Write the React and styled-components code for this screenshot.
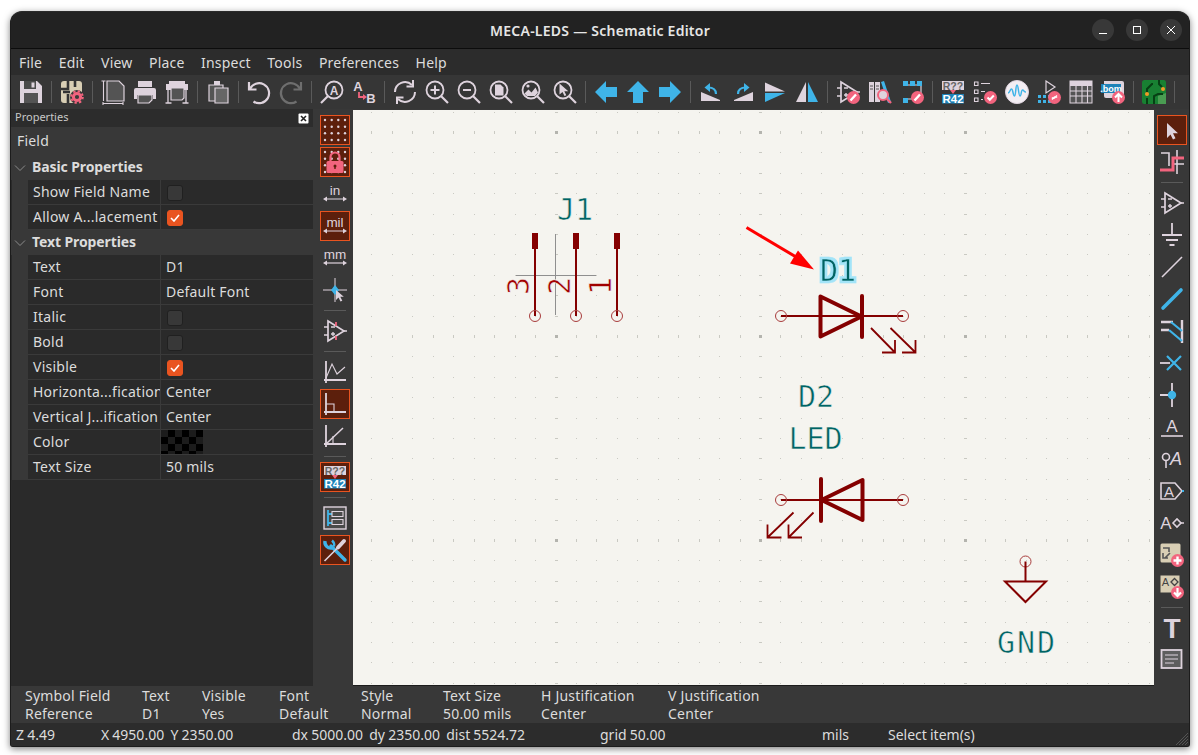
import styled, { createGlobalStyle } from "styled-components";

const P = "#ded3dd";
const B = "#3fb4e8";
const R = "#f2647e";
const D = "#545454";
const ORANGE = "#e95420";
const WIRE = "#840000";
const TEAL = "#006464";
const PAPER = "#f5f4ef";

const GlobalStyle = createGlobalStyle`
    html, body {
        margin: 0;
        background: #ffffff;
    }
    body {
        font-family: "Noto Sans", "Open Sans", sans-serif;
        font-size: 14px;
        color: #dcdcdc;
    }
`;

const Page = styled.div`
    padding: 11px 8px 8px 10px;
`;

const Window = styled.div`
    width: 1180px;
    height: 736px;
    box-sizing: border-box;
    display: flex;
    flex-direction: column;
    border: 1px solid #1c1c1c;
    border-top-color: #2a2a2a;
    border-radius: 12px 12px 3px 3px;
    overflow: hidden;
    background: #383838;
    box-shadow: 0 2px 7px rgba(0, 0, 0, 0.5);
`;

const TitleBar = styled.div`
    height: 36px;
    flex: none;
    display: flex;
    align-items: center;
    justify-content: center;
    position: relative;
    background: #222222;
    border-bottom: 1px solid #0c0c0c;
`;

const Title = styled.div`
    font-size: 14px;
    font-weight: 600;
    letter-spacing: 0.25px;
    color: #e6e6e6;
`;

const WindowButtons = styled.div`
    position: absolute;
    right: 7px;
    top: 7px;
    display: flex;
    gap: 12px;
`;

const WindowButton = styled.div`
    width: 22px;
    height: 22px;
    border-radius: 50%;
    background: #383838;
    display: flex;
    align-items: center;
    justify-content: center;
`;

const MenuBar = styled.div`
    height: 26px;
    flex: none;
    display: flex;
    align-items: center;
    padding-left: 8px;
    gap: 16.5px;
    background: #2c2c2c;
    font-size: 14px;
    letter-spacing: 0.2px;
`;

const TopBar = styled.div`
    height: 34px;
    flex: none;
    display: flex;
    align-items: center;
    padding-left: 4px;
    background: #363636;
`;

const Button = styled.div`
    width: 32px;
    height: 32px;
    flex: none;
    display: flex;
    align-items: center;
    justify-content: center;
`;

const ButtonFace = styled.div`
    width: 30px;
    height: 30px;
    box-sizing: border-box;
    display: flex;
    align-items: center;
    justify-content: center;
    border: ${({ $active }) => ($active ? `1px solid ${ORANGE}` : "none")};
    background: ${({ $active }) => ($active ? "#5c1f0c" : "transparent")};
`;

const Glyph = styled.svg`
    width: 24px;
    height: 24px;
    display: block;
    flex: none;
    overflow: visible;
`;

const VSep = styled.div`
    width: 1px;
    height: 22px;
    margin: 0 4px;
    flex: none;
    background: #5a5a5a;
`;

const HSep = styled.div`
    width: 22px;
    height: 1px;
    margin: 4px 5px;
    flex: none;
    background: #5a5a5a;
`;

const Main = styled.div`
    height: 577px;
    flex: none;
    display: flex;
`;

const Panel = styled.div`
    width: 302px;
    flex: none;
    display: flex;
    flex-direction: column;
    background: #2a2a2a;
`;

const PanelCaption = styled.div`
    height: 18px;
    box-sizing: border-box;
    flex: none;
    display: flex;
    align-items: center;
    justify-content: space-between;
    padding: 0 4px 3px;
    background: #2c2c2c;
    font-size: 11px;
    color: #c8c8c8;
`;

const CloseBox = styled.svg`
    width: 11px;
    height: 11px;
    margin-top: 3px;
`;

const PanelTitle = styled.div`
    height: 28px;
    box-sizing: border-box;
    flex: none;
    display: flex;
    align-items: center;
    padding: 0 0 2px 6px;
    background: #383838;
    letter-spacing: 0.2px;
`;

const Section = styled.div`
    height: 25px;
    box-sizing: border-box;
    flex: none;
    display: flex;
    align-items: center;
    padding-bottom: 2px;
    background: #383838;
    font-weight: 700;
    letter-spacing: -0.1px;
`;

const Chevron = styled.svg`
    width: 12px;
    height: 8px;
    margin: 2px 6px 0 3px;
`;

const Rows = styled.div`
    flex: none;
    border-left: 16px solid #383838;
    margin-left: 1px;
`;

const Row = styled.div`
    height: 25px;
    box-sizing: border-box;
    display: grid;
    grid-template-columns: 133px 1fr;
    align-items: center;
    border-bottom: 1px solid #3a3a3a;
    background: #2a2a2a;
`;

const Label = styled.div`
    box-sizing: border-box;
    padding: 0 0 2px 5px;
    height: 100%;
    display: flex;
    align-items: center;
    white-space: nowrap;
    overflow: hidden;
    letter-spacing: 0.25px;
    border-right: 1px solid #3a3a3a;
`;

const Value = styled.div`
    padding: 0 0 ${({ $text }) => ($text ? 2 : 0)}px 5px;
    white-space: nowrap;
    letter-spacing: 0.2px;
`;

const Check = styled.div`
    width: 16px;
    height: 16px;
    box-sizing: border-box;
    margin: 2px 0 0 1px;
    border-radius: 3px;
    display: flex;
    align-items: center;
    justify-content: center;
    background: ${({ $on }) => ($on ? ORANGE : "#383838")};
    border: 1px solid ${({ $on }) => ($on ? ORANGE : "#202020")};
`;

const Swatch = styled.div`
    width: 42px;
    height: 24px;
    margin-left: -5px;
    background: repeating-conic-gradient(#000000 0 25%, #1c1c1c 0 50%) 0 0 / 14px 14px;
`;

const SideBar = styled.div`
    flex: none;
    display: flex;
    flex-direction: column;
    padding: 5px 0 0 ${({ $left }) => $left}px;
    width: ${({ $width }) => $width}px;
    box-sizing: border-box;
    background: #383838;
`;

const Canvas = styled.div`
    flex: 1;
    min-width: 0;
    margin-top: 1px;
    background: ${PAPER};
    border-bottom: 1px solid #1c1c1c;
`;

const Sheet = styled.svg`
    display: block;
    width: 801px;
    height: 575px;
`;

const FieldText = styled.text`
    font-family: "DejaVu Sans Mono", monospace;
    font-size: 30px;
    fill: ${({ $color }) => $color || TEAL};
    stroke: ${({ $edge }) => $edge || PAPER};
    stroke-width: 0.6px;
`;

const MessagePanel = styled.div`
    height: 37px;
    flex: none;
    display: grid;
    grid-template-columns: 117px 60px 77px 82px 82px 98px 127px 1fr;
    align-content: center;
    padding-left: 14px;
    background: #383838;
    line-height: 18px;
    letter-spacing: 0.2px;
`;

const Cell = styled.div`
    white-space: nowrap;
`;

const StatusBar = styled.div`
    height: 23px;
    flex: none;
    display: flex;
    align-items: center;
    padding-left: 5px;
    background: #2c2c2c;
`;

const StatusItem = styled.div`
    width: ${({ $width }) => $width}px;
    flex: none;
    white-space: pre;
    word-spacing: -0.5px;
`;

const Grip = styled.svg`
    width: 14px;
    height: 18px;
    margin-left: auto;
    margin-top: 4px;
`;

const Stroke = ({ d, c = P, w = 1.8, ...rest }) => (
    <path d={d} fill="none" stroke={c} strokeWidth={w} {...rest} />
);

const Lens = ({ children }) => (
    <>
        <circle cx="10" cy="10" r="8.5" fill="none" stroke={P} strokeWidth="1.8" />
        <Stroke d="M16 16l7 7" w="2.2" />
        {children}
    </>
);

const Amp = ({ pins }) => (
    <>
        <path d="M5 2 21 12 5 22Z" fill="none" stroke={P} strokeWidth="1.7" />
        <Stroke d="M1 8h4M1 16h4M21 12h3M8 8h4M8 15h4M10 13v4" w="1.4" />
        {pins && <Stroke d="M13 3v4M13 17v4" c={R} w="1.8" />}
    </>
);

const Badge = ({ children }) => (
    <>
        <circle cx="17.5" cy="17.5" r="6.5" fill={R} />
        {children}
    </>
);

const Pencil = () => <Stroke d="M14.5 20.5l5.5-6" c="#ffffff" w="2.4" />;

const Tiny = ({ x, y, size = 10, fill = P, bold, italic, children }) => (
    <text
        x={x}
        y={y}
        textAnchor="middle"
        fontFamily="'Liberation Sans', sans-serif"
        fontSize={size}
        fontWeight={bold ? 700 : 400}
        fontStyle={italic ? "italic" : "normal"}
        fill={fill}
    >
        {children}
    </text>
);

const Unit = ({ label, y = 17 }) => (
    <>
        <Tiny x="12" y={y - 4} size="13.5">
            {label}
        </Tiny>
        <Stroke d={`M2 ${y}h20`} w="1.2" />
        <path d={`M0 ${y}l4-2.5v5zM24 ${y}l-4-2.5v5z`} fill={P} />
    </>
);

const Annotate = () => (
    <>
        <rect x="1" y="1" width="22" height="9" fill={P} />
        <Tiny x="12" y="9.5" size="10.5" fill="#666666" bold>
            R??
        </Tiny>
        <path d="M9 10h6l-3 4z" fill={R} />
        <rect x="1" y="14" width="22" height="9.5" fill="#1d82b8" />
        <Tiny x="12" y="23" size="11.5" fill="#ffffff" bold>
            R42
        </Tiny>
    </>
);

const DOT_STEPS = [2, 8.7, 15.3, 22];

const GridDots = () => (
    <>
        {DOT_STEPS.flatMap((y) =>
            DOT_STEPS.map((x) => (
                <circle key={`${x}-${y}`} cx={x} cy={y} r="1.2" fill={P} />
            ))
        )}
    </>
);

const ICONS = {
    save: (
        <>
            <path d="M1 1h17l5 5v17H1z" fill={P} />
            <path d="M5 1h12v8H5z" fill="#4a4a4a" />
            <path d="M12.5 2.5h3v5h-3z" fill={P} />
            <path d="M5 13h14v10H5z" fill={D} />
        </>
    ),
    symbolLib: (
        <>
            <rect x="1" y="1" width="21" height="22" rx="3" fill="#d8ceb4" />
            <Stroke d="M8 1v8H1M8 14v9M15 1v6M3 12h7" c="#333333" w="2.6" />
            <circle cx="17" cy="17" r="7" fill="#3a3a3a" />
            <circle cx="17" cy="17" r="3.6" fill="none" stroke={R} strokeWidth="3" />
            <circle cx="17" cy="17" r="5.8" fill="none" stroke={R} strokeWidth="2" strokeDasharray="2.3 2.25" />
        </>
    ),
    page: (
        <>
            <path d="M6 1h12l5 5v15H6z" fill={D} stroke={P} strokeWidth="1.2" />
            <Stroke d="M2.5 1v20M0.5 1h4M2 23.5h20M2 22v3M22 22v3" w="1.1" />
        </>
    ),
    print: (
        <>
            <path d="M5 1h14v6H5z" fill={P} />
            <path d="M3 8h18a2 2 0 0 1 2 2v9h-3v-4H4v4H1v-9a2 2 0 0 1 2-2z" fill={P} />
            <path d="M5 15h14v5l-3 3H5z" fill={D} stroke={P} strokeWidth="1.2" />
        </>
    ),
    plot: (
        <>
            <path d="M4 1h16v3H4zM1 4h22v6H1z" fill={P} />
            <path d="M6 8h13v10l-2 2H6z" fill={D} stroke={P} strokeWidth="1.2" />
            <Stroke d="M3 10v13M21 10v13M0.5 23h6M17.5 23h6" w="1.3" />
        </>
    ),
    paste: (
        <>
            <path d="M8 1h6v4H8z" fill={P} />
            <path d="M3 5h14v16H3z" fill={D} stroke={P} strokeWidth="1.2" />
            <path d="M9 8h13v15H9z" fill="#666666" stroke={P} strokeWidth="1.2" />
        </>
    ),
    undo: (
        <g transform="translate(-1.5 0)">
            <Stroke d="M4.5 9A10 10 0 1 1 8 21.5" w="2.2" />
            <Stroke d="M3.5 2v7.5H11" w="2.2" />
        </g>
    ),
    redo: (
        <g transform="translate(1.5 0)">
            <Stroke d="M19.5 9A10 10 0 1 0 16 21.5" c="#6e6e6e" w="2.2" />
            <Stroke d="M20.5 2v7.5H13" c="#6e6e6e" w="2.2" />
        </g>
    ),
    find: (
        <>
            <circle cx="14" cy="10" r="8.5" fill="none" stroke={P} strokeWidth="1.8" />
            <Stroke d="M8 16l-7 7" w="2.2" />
            <Tiny x="14" y="14.5" size="12" bold>
                A
            </Tiny>
        </>
    ),
    replace: (
        <>
            <Tiny x="6" y="11" size="13" bold>
                A
            </Tiny>
            <Stroke d="M7 12v5h5" c={R} w="1.8" />
            <path d="M11 14l4 3-4 3z" fill={R} />
            <Tiny x="19" y="23" size="13" bold>
                B
            </Tiny>
        </>
    ),
    refresh: (
        <>
            <Stroke d="M2 12A10 10 0 0 1 19 5" w="2" />
            <Stroke d="M22 12A10 10 0 0 1 5 19" w="2" />
            <Stroke d="M20 0v6.5h-6.5M4 24v-6.5h6.5" w="2" />
        </>
    ),
    zoomIn: (
        <Lens>
            <Stroke d="M5.5 10h9M10 5.5v9" w="2" />
        </Lens>
    ),
    zoomOut: (
        <Lens>
            <Stroke d="M6 10h8" w="2.2" />
        </Lens>
    ),
    zoomFit: (
        <Lens>
            <path d="M6 4.5h5.5l3 3V15.5H6z" fill={P} />
        </Lens>
    ),
    zoomObject: (
        <Lens>
            <path d="M3.5 13.5l4-4 3 3 4-5 2.5 5-3 3.5H6z" fill={P} />
            <circle cx="7" cy="6" r="1.6" fill={P} />
        </Lens>
    ),
    zoomSelect: (
        <Lens>
            <path d="M6.5 3.5v11l3-2.5 2 4 1.8-.8-2-4h4z" fill={P} />
        </Lens>
    ),
    left: <path d="M1 12 12 1v6h11v10H12v6z" fill={B} />,
    up: <path d="M12 1l11 11h-6v11H7V12H1z" fill={B} />,
    right: <path d="M23 12 12 1v6H1v10h11v6z" fill={B} />,
    rotateCcw: (
        <>
            <path d="M2 21h19v-1L2 12z" fill={P} />
            <Stroke d="M17 14C17 9.5 14.5 7.5 9 7.5" c={B} w="2.2" />
            <path d="M5.5 7.5 11 3v9z" fill={B} />
        </>
    ),
    rotateCw: (
        <>
            <path d="M22 21H3v-1l19-8z" fill={P} />
            <Stroke d="M7 14C7 9.5 9.5 7.5 15 7.5" c={B} w="2.2" />
            <path d="M18.5 7.5 13 3v9z" fill={B} />
        </>
    ),
    mirrorV: (
        <>
            <path d="M2 2.5 22 11.5H2z" fill={P} />
            <path d="M2 13h20L2 22z" fill={B} />
        </>
    ),
    mirrorH: (
        <>
            <path d="M11 2v20H1z" fill={P} />
            <path d="M13 2v20h10z" fill={B} />
        </>
    ),
    symbolEdit: (
        <>
            <Amp />
            <Badge>
                <Pencil />
            </Badge>
        </>
    ),
    libBrowser: (
        <>
            <path d="M1 2h5v20H1zM7 2h5v20H7z" fill={P} />
            <path d="M13 2l3-1 7 21-3 1z" fill={B} />
            <Stroke d="M2 6h3M8 6h3M2 9h3M8 9h3" c="#555555" w="1.2" />
            <circle cx="15" cy="15" r="5" fill={P} stroke={R} strokeWidth="2" />
            <Stroke d="M19 19l4 4" c={R} w="2.4" />
        </>
    ),
    footprintEdit: (
        <>
            <path d="M3 5h18v14H3" fill="none" stroke={P} strokeWidth="1.2" />
            <path d="M3 1h5v5H3zM10 1h5v5h-5zM17 1h5v5h-5zM3 18h5v5H3z" fill={B} />
            <Badge>
                <Pencil />
            </Badge>
        </>
    ),
    annotate: <Annotate />,
    erc: (
        <>
            <Stroke d="M1.5 2H5v3.5H1.5zM1.5 10H5v3.5H1.5zM1.5 18H5v3.5H1.5z" w="1.1" />
            <Stroke d="M8 3.5h9M8 11.5h4M8 19.5h2" w="1.2" />
            <Badge>
                <Stroke d="M14.5 17.5l2.3 2.3 4-4.3" c="#ffffff" w="2" />
            </Badge>
        </>
    ),
    simulator: (
        <>
            <circle cx="12" cy="12" r="11.5" fill="#f3eef3" stroke={P} />
            <Stroke d="M3 13c2 0 2-4 3.5-4s1.5 7 3 7 1-11 2.5-11 1.5 11 3 11 1-6 2.5-6 1.5 2 3.5 2" c={B} w="1.5" />
        </>
    ),
    pcbSync: (
        <>
            <path d="M9 1l9 6-9 6z" fill="none" stroke={P} strokeWidth="1.2" />
            <path d="M1 15h3v3H1zM1 20h3v3H1zM6 15h3v3H6zM6 20h3v3H6zM11 15h3v3h-3zM11 20h3v3h-3z" fill={B} />
            <Badge>
                <Stroke d="M15 19.5l2-2a2 2 0 0 1 3 0M20 15.5l-2 2a2 2 0 0 1-3 0" c="#ffffff" w="1.5" />
            </Badge>
        </>
    ),
    table: (
        <>
            <rect x="1" y="1" width="22" height="22" fill={D} stroke={P} strokeWidth="1" />
            <path d="M1 1h22v5H1z" fill={P} />
            <Stroke d="M1 11h22M1 16h22M7 1v22M13 1v22M18.5 1v22" w="1.1" />
        </>
    ),
    bom: (
        <>
            <path d="M3 1h18a2 2 0 0 1 2 2v15H5a2 2 0 0 1-2-2z" fill={P} />
            <rect x="0" y="4" width="20" height="9" fill="#1d82b8" />
            <Tiny x="10" y="11.5" size="9" fill="#ffffff" bold>
                .bom
            </Tiny>
            <Badge>
                <Stroke d="M17.5 22v-8M14 17.5l3.5-3.5 3.5 3.5" c="#ffffff" w="2" />
            </Badge>
        </>
    ),
    pcb: (
        <>
            <rect x="0" y="0" width="24" height="24" rx="2.5" fill="#188032" />
            <path d="M16 24V16l8-3v11z" fill="#4a9c52" />
            <Stroke d="M5 14V9l5-5h1M5 24v-6M12 24v-8l4-2h5M17 0v4l3 3" c="#073f14" w="2" />
            <circle cx="5" cy="14" r="2" fill="#f09a28" />
            <circle cx="21" cy="9" r="2" fill="#f09a28" />
        </>
    ),
    gridDots: <GridDots />,
    gridLock: (
        <>
            <GridDots />
            <path d="M7.5 11V7a4.5 4.5 0 0 1 9 0v4" fill="none" stroke={R} strokeWidth="2.2" />
            <rect x="3.5" y="11" width="17" height="12" rx="1.5" fill={R} />
            <circle cx="12" cy="16" r="1.5" fill="#5c1f0c" />
            <path d="M11.3 16h1.4v3h-1.4z" fill="#5c1f0c" />
        </>
    ),
    inch: <Unit label="in" />,
    mil: <Unit label="mil" />,
    mm: <Unit label="mm" />,
    cursor: (
        <>
            <Stroke d="M12 0v24M0 12h24" w="1" />
            <path d="M12 7l4 5-4 5-4-5z" fill={B} />
            <path d="M13 12v10l2.5-2.5 2 4 1.8-.8-2-4h3.5z" fill={P} />
        </>
    ),
    ampPins: <Amp pins />,
    lineFree: (
        <>
            <Stroke d="M3 1v22M1 20h22" w="1.8" />
            <Stroke d="M3 18 9 4l5 10 8-7" w="1.1" />
        </>
    ),
    lineNinety: (
        <>
            <Stroke d="M3 1v22M1 20h22" w="1.8" />
            <Stroke d="M3 12h8v8" w="1.1" />
        </>
    ),
    lineAny: (
        <>
            <Stroke d="M3 1v22M1 20h22" w="1.8" />
            <Stroke d="M3 20 20 4" w="1.5" />
            <Stroke d="M10 12v8" w="1.1" />
        </>
    ),
    tree: (
        <>
            <rect x="1" y="1" width="22" height="22" fill="#4a4a4a" stroke={P} strokeWidth="1.4" />
            <Stroke d="M5 4v16M5 8h4M5 17h4" c={B} w="1.8" />
            <Stroke d="M9 5.5h11v5H9zM9 13.5h11v5H9z" w="1.1" />
        </>
    ),
    tools: (
        <>
            <Stroke d="M22 22 8 8" c={B} w="3.4" strokeLinecap="round" />
            <Stroke d="M2 3a6 6 0 0 0 7 7" c={B} w="3.4" />
            <Stroke d="M9 2.5a6 6 0 0 1 2 6" c={B} w="2.4" />
            <Stroke d="M1.5 23 14 10.5" w="1.6" />
            <Stroke d="M15 9.5 21 3" w="4" strokeLinecap="round" />
        </>
    ),
    select: <path d="M7 5v15l3.5-3.5 2.5 5 2.5-1.2-2.5-5h5z" fill={P} />,
    netHighlight: (
        <>
            <Stroke d="M1 3h8v13M17 0v24M13 14h11" w="1.6" />
            <Stroke d="M0 20h13V8h11" c={R} w="3" />
        </>
    ),
    amp: <Amp />,
    ground: <Stroke d="M12 0v12M2 12h20M6 17h12M9.5 22h5" w="1.8" />,
    line: <Stroke d="M2 22 22 2" w="1.6" />,
    wire: <Stroke d="M3 21 21 3" c={B} w="3.6" strokeLinecap="round" />,
    busEntry: (
        <>
            <Stroke d="M1 3h12M1 11h8M22 1v23" w="2.4" />
            <Stroke d="M11 3l11 9M9 11l13 11" c={B} w="2.2" />
        </>
    ),
    noConnect: (
        <>
            <Stroke d="M0 12h10" w="1.8" />
            <Stroke d="M7 5l14 14M21 5 7 19" c={B} w="2.2" />
        </>
    ),
    junction: (
        <>
            <Stroke d="M12 0v24M0 12h12" w="1.8" />
            <circle cx="12" cy="12" r="4.2" fill={B} />
        </>
    ),
    textLabel: (
        <>
            <Tiny x="12" y="17" size="17">
                A
            </Tiny>
            <Stroke d="M1 21h22" w="1.6" />
        </>
    ),
    netLabel: (
        <>
            <circle cx="6" cy="10" r="3.5" fill="none" stroke={P} strokeWidth="1.6" />
            <Stroke d="M6 14v7" w="1.6" />
            <Tiny x="16" y="18" size="18" italic>
                A
            </Tiny>
        </>
    ),
    globalLabel: (
        <>
            <path d="M1 4h14l7 8-7 8H1z" fill="none" stroke={P} strokeWidth="1.6" />
            <Tiny x="9" y="17.5" size="15">
                A
            </Tiny>
            <Stroke d="M22 12h2" c={B} w="1.8" />
        </>
    ),
    hierLabel: (
        <>
            <Tiny x="6" y="18" size="17">
                A
            </Tiny>
            <path d="M13 12l4-4 4 4-4 4z" fill="none" stroke={P} strokeWidth="1.6" />
            <Stroke d="M21 12h3" w="1.6" />
        </>
    ),
    sheetPin: (
        <>
            <rect x="0.5" y="0.5" width="20" height="19" rx="1.5" fill="#d8ceb4" />
            <Stroke d="M3 5h6v4M5 15l5-5M3 10v5h5" c="#555555" w="1.6" />
            <Badge>
                <Stroke d="M17.5 13.5v8M13.5 17.5h8" c="#ffffff" w="2.4" />
            </Badge>
        </>
    ),
    sheetImport: (
        <>
            <rect x="0.5" y="0.5" width="19" height="17" fill="#d8ceb4" />
            <Tiny x="5.5" y="11" size="11" fill="#444444">
                A
            </Tiny>
            <path d="M11 7l3.5-3.5L18 7l-3.5 3.5z" fill="none" stroke="#444444" strokeWidth="1.3" />
            <Badge>
                <Stroke d="M17.5 13v8M14 17.5l3.5 3.5 3.5-3.5" c="#ffffff" w="2.2" />
            </Badge>
        </>
    ),
    bigText: (
        <Tiny x="12" y="22" size="28" bold>
            T
        </Tiny>
    ),
    textBox: (
        <>
            <rect x="1.5" y="2" width="20" height="18" fill="#5e5e5e" stroke={P} strokeWidth="1.8" />
            <Stroke d="M5 7h13M5 11h13M5 15h9" w="1.2" />
        </>
    ),
};

const TOP_TOOLS = [
    "save", "|", "symbolLib", "|", "page", "print", "plot", "|", "paste", "|", "undo", "redo", "|",
    "find", "replace", "|", "refresh", "zoomIn", "zoomOut", "zoomFit", "zoomObject", "zoomSelect", "|",
    "left", "up", "right", "|", "rotateCcw", "rotateCw", "mirrorV", "mirrorH", "|",
    "symbolEdit", "libBrowser", "footprintEdit", "|",
    "annotate", "erc", "simulator", "pcbSync", "table", "bom", "|", "pcb", "|",
];

const LEFT_TOOLS = [
    ["gridDots", true], ["gridLock", true], ["inch"], ["mil", true], ["mm"], ["cursor"], "|",
    ["ampPins"], "|", ["lineFree"], ["lineNinety", true], ["lineAny"], "|",
    ["annotate", true], "|", ["tree"], ["tools", true],
];

const RIGHT_TOOLS = [
    ["select", true], ["netHighlight"], "|", ["amp"], ["ground"], ["line"], ["wire"], ["busEntry"],
    ["noConnect"], ["junction"], ["textLabel"], ["netLabel"], ["globalLabel"], ["hierLabel"],
    ["sheetPin"], ["sheetImport"], "|", ["bigText"], ["textBox"],
];

const MENUS = ["File", "Edit", "View", "Place", "Inspect", "Tools", "Preferences", "Help"];

const BASIC_ROWS = [
    { label: "Show Field Name", check: false },
    { label: "Allow A...lacement", check: true },
];

const TEXT_ROWS = [
    { label: "Text", value: "D1" },
    { label: "Font", value: "Default Font" },
    { label: "Italic", check: false },
    { label: "Bold", check: false },
    { label: "Visible", check: true },
    { label: "Horizonta...fication", value: "Center" },
    { label: "Vertical J...ification", value: "Center" },
    { label: "Color", swatch: true },
    { label: "Text Size", value: "50 mils" },
];

const MESSAGES = [
    ["Symbol Field", "Reference"],
    ["Text", "D1"],
    ["Visible", "Yes"],
    ["Font", "Default"],
    ["Style", "Normal"],
    ["Text Size", "50.00 mils"],
    ["H Justification", "Center"],
    ["V Justification", "Center"],
];

function Icon({ name }) {
    return <Glyph viewBox="0 0 24 24">{ICONS[name]}</Glyph>;
}

function SideTools({ items, left, width }) {
    return (
        <SideBar $left={left} $width={width}>
            {items.map((item, i) =>
                item === "|" ? (
                    <HSep key={i} />
                ) : (
                    <Button key={i}>
                        <ButtonFace $active={item[1]}>
                            <Icon name={item[0]} />
                        </ButtonFace>
                    </Button>
                )
            )}
        </SideBar>
    );
}

function PropertyRow({ row }) {
    return (
        <Row>
            <Label>{row.label}</Label>
            <Value $text={Boolean(row.value)}>
                {row.value}
                {row.check !== undefined && (
                    <Check $on={row.check}>
                        {row.check && (
                            <svg width="10" height="8" viewBox="0 0 10 8">
                                <path d="M1 4l3 3 5-6" fill="none" stroke="#ffffff" strokeWidth="1.6" />
                            </svg>
                        )}
                    </Check>
                )}
                {row.swatch && <Swatch />}
            </Value>
        </Row>
    );
}

function SectionHead({ children }) {
    return (
        <Section>
            <Chevron viewBox="0 0 12 8">
                <path d="M1 1.5l5 5 5-5" fill="none" stroke="#8a8a8a" strokeWidth="1" />
            </Chevron>
            {children}
        </Section>
    );
}

function Dots() {
    const dots = [];
    for (let i = -20; i <= 19; i++) {
        for (let j = -21; j <= 7; j++) {
            const x = Math.round(760 + i * 20.45);
            const y = Math.round(540 + j * 20.4);
            const majorX = (i + 200) % 10 === 0;
            const majorY = (j + 200) % 10 === 0;
            const w = majorX ? 3 : 1;
            const h = majorY ? 3 : 1;
            dots.push(
                <rect
                    key={`${i}/${j}`}
                    x={x - (w - 1) / 2}
                    y={y - (h - 1) / 2}
                    width={w}
                    height={h}
                    fill={majorX && majorY ? "#b4b4ae" : "#c9c9c2"}
                />
            );
        }
    }
    return <g>{dots}</g>;
}

const PinEnd = ({ x, y }) => (
    <circle cx={x} cy={y} r="5.5" fill="none" stroke="#a83c3c" strokeWidth="1" />
);

function Schematic() {
    return (
        <Sheet viewBox="353 110 801 575">
            <defs>
                <filter id="selected" x="-20%" y="-30%" width="140%" height="160%">
                    <feMorphology in="SourceAlpha" operator="dilate" radius="2.4" result="grown" />
                    <feFlood floodColor="#a3e4f8" />
                    <feComposite in2="grown" operator="in" />
                    <feMerge>
                        <feMergeNode />
                        <feMergeNode in="SourceGraphic" />
                    </feMerge>
                </filter>
            </defs>

            <Dots />

            <path d="M555.5 234v81M516 275.5h80" fill="none" stroke="#8f8f8f" strokeWidth="1" />
            {[535, 576, 617].map((x) => (
                <g key={x}>
                    <path d={`M${x} 233v16`} stroke={WIRE} strokeWidth="6" />
                    <path d={`M${x} 245v71`} stroke={WIRE} strokeWidth="2" />
                    <PinEnd x={x} y={316} />
                </g>
            ))}
            <FieldText x="557" y="220">J1</FieldText>
            <FieldText transform="translate(529 295) rotate(-90)" $color="#a00000">3</FieldText>
            <FieldText transform="translate(570 295) rotate(-90)" $color="#a00000">2</FieldText>
            <FieldText transform="translate(611 295) rotate(-90)" $color="#a00000">1</FieldText>

            <path d="M746.5 227.5 802 260.5" stroke="#ff0000" strokeWidth="3" />
            <path d="M814 269.5 790 263.5 798 250.5z" fill="#ff0000" />

            <FieldText x="820" y="281" $edge="#a3e4f8" filter="url(#selected)">D1</FieldText>
            <path d="M781 316h122" stroke={WIRE} strokeWidth="2" />
            <path d="M820.5 296.5v40l41-20z" fill="none" stroke={WIRE} strokeWidth="4" strokeLinejoin="round" />
            <path d="M862 296v41" stroke={WIRE} strokeWidth="4" strokeLinecap="round" />
            <PinEnd x={781} y={316} />
            <PinEnd x={903} y={316} />
            <path
                d="M871 328 895 352.5M882 352.5h13V340M890.5 328 915.5 352.5M902 352.5h13.5V340"
                fill="none"
                stroke={WIRE}
                strokeWidth="1.8"
            />

            <FieldText x="798" y="407">D2</FieldText>
            <FieldText x="788.5" y="449">LED</FieldText>
            <path d="M781 500h122" stroke={WIRE} strokeWidth="2" />
            <path d="M862.5 480v40l-41-20z" fill="none" stroke={WIRE} strokeWidth="4" strokeLinejoin="round" />
            <path d="M821 479v42" stroke={WIRE} strokeWidth="4" strokeLinecap="round" />
            <PinEnd x={781} y={500} />
            <PinEnd x={903} y={500} />
            <path
                d="M793.5 512.5 767.5 537.5M781.5 537.5h-14V524.5M813.5 512.5 788.5 537.5M802 537.5h-13.5V524.5"
                fill="none"
                stroke={WIRE}
                strokeWidth="1.8"
            />

            <PinEnd x={1025.5} y={561.5} />
            <path d="M1025.5 561.5v20" stroke={WIRE} strokeWidth="2" />
            <path d="M1005 581.5h41l-20.5 20.5z" fill="none" stroke={WIRE} strokeWidth="2" />
            <FieldText x="997" y="653" letterSpacing="2">GND</FieldText>
        </Sheet>
    );
}

function App() {
    return (
        <Page>
            <GlobalStyle />
            <Window>
                <TitleBar>
                    <Title>MECA-LEDS — Schematic Editor</Title>
                    <WindowButtons>
                        <WindowButton>
                            <svg width="10" height="10" viewBox="0 0 10 10">
                                <path d="M1 8.5h8" stroke="#ffffff" strokeWidth="1" />
                            </svg>
                        </WindowButton>
                        <WindowButton>
                            <svg width="10" height="10" viewBox="0 0 10 10">
                                <rect x="1.5" y="1.5" width="7" height="7" fill="none" stroke="#ffffff" strokeWidth="1" />
                            </svg>
                        </WindowButton>
                        <WindowButton>
                            <svg width="10" height="10" viewBox="0 0 10 10">
                                <path d="M1 1l8 8M9 1l-8 8" stroke="#ffffff" strokeWidth="1" />
                            </svg>
                        </WindowButton>
                    </WindowButtons>
                </TitleBar>

                <MenuBar>
                    {MENUS.map((menu) => (
                        <div key={menu}>{menu}</div>
                    ))}
                </MenuBar>

                <TopBar>
                    {TOP_TOOLS.map((tool, i) =>
                        tool === "|" ? (
                            <VSep key={i} />
                        ) : (
                            <Button key={i}>
                                <Icon name={tool} />
                            </Button>
                        )
                    )}
                </TopBar>

                <Main>
                    <Panel>
                        <PanelCaption>
                            Properties
                            <CloseBox viewBox="0 0 11 11">
                                <rect x="0.5" y="0.5" width="10" height="10" rx="1" fill="#ffffff" />
                                <path d="M3 3l5 5M8 3l-5 5" stroke="#222222" strokeWidth="1.6" />
                            </CloseBox>
                        </PanelCaption>
                        <PanelTitle>Field</PanelTitle>
                        <SectionHead>Basic Properties</SectionHead>
                        <Rows>
                            {BASIC_ROWS.map((row) => (
                                <PropertyRow key={row.label} row={row} />
                            ))}
                        </Rows>
                        <SectionHead>Text Properties</SectionHead>
                        <Rows>
                            {TEXT_ROWS.map((row) => (
                                <PropertyRow key={row.label} row={row} />
                            ))}
                        </Rows>
                    </Panel>

                    <SideTools items={LEFT_TOOLS} left={6} width={40} />

                    <Canvas>
                        <Schematic />
                    </Canvas>

                    <SideTools items={RIGHT_TOOLS} left={2} width={35} />
                </Main>

                <MessagePanel>
                    {MESSAGES.map(([head, value]) => (
                        <Cell key={head}>
                            {head}
                            <br />
                            {value}
                        </Cell>
                    ))}
                </MessagePanel>

                <StatusBar>
                    <StatusItem $width={85}>Z 4.49</StatusItem>
                    <StatusItem $width={191}>X 4950.00  Y 2350.00</StatusItem>
                    <StatusItem $width={308}>dx 5000.00  dy 2350.00  dist 5524.72</StatusItem>
                    <StatusItem $width={222}>grid 50.00</StatusItem>
                    <StatusItem $width={66}>mils</StatusItem>
                    <StatusItem $width={200}>Select item(s)</StatusItem>
                    <Grip viewBox="0 0 14 18">
                        <path d="M1 17 13 5M4 17l9-9M7 17l6-6M10 17l3-3" stroke="#555555" strokeWidth="1" />
                    </Grip>
                </StatusBar>
            </Window>
        </Page>
    );
}

export default App;
